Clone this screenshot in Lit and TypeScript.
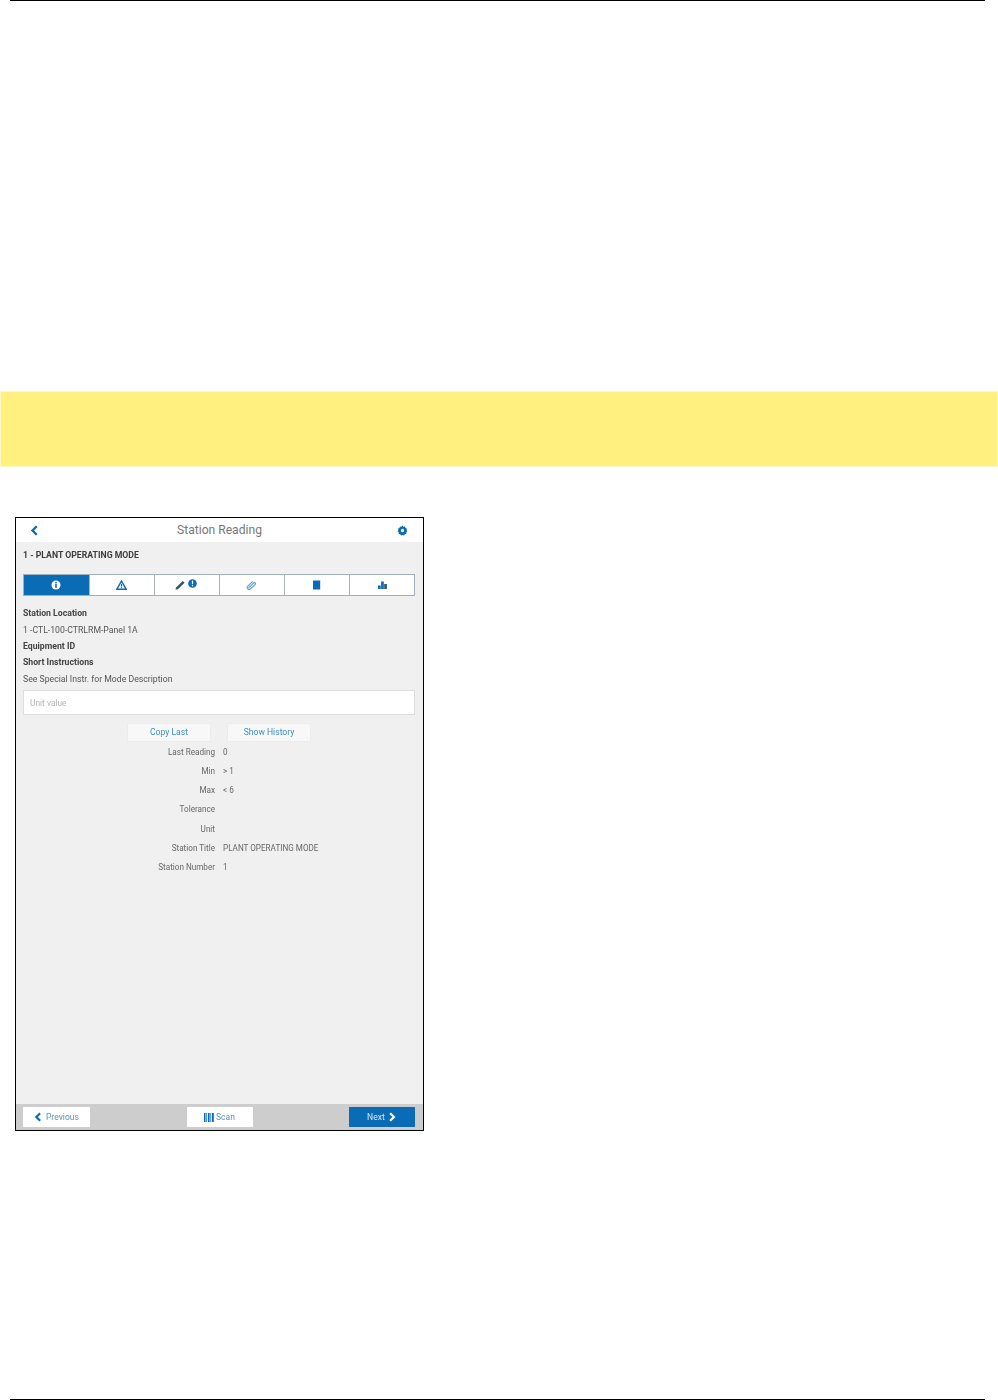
import { LitElement, html, css, svg } from "lit";
import { customElement } from "lit/decorators.js";

const BLUE = "#0a6cb4";

const icons = {
  back: svg`<path d="M8 1.500 3 6.500l5 5" fill="none" stroke-width="2.8" stroke="currentColor"/>`,
  next: svg`<path d="M4 1.500 9 6.500l-5 5" fill="none" stroke-width="2.8" stroke="currentColor"/>`,
};

@customElement("app-root")
export class AppRoot extends LitElement {
  static styles = css`
    :host {
      --blue: #0a6cb4;
      display: block;
      width: 998px;
      height: 1400px;
      background: #fff;
      font-family: Roboto, "Liberation Sans", sans-serif;
      overflow: hidden;
    }
    .page { display: flex; flex-direction: column; height: 1400px; }
    .rule { height: 1px; background: #000; margin: 0 13px 0 10px; flex: none; }
    .banner { height: 74px; margin: 391px 1px 0 1px; background: #fff07f; flex: none; box-shadow: 0 0 0 1px #fff8c4; }
    .phone {
      margin: 51px 0 0 15px;
      width: 407px;
      height: 612px;
      border: 1px solid #000;
      background: #f0f0f0;
      display: flex;
      flex-direction: column;
      flex: none;
    }
    .inner { display: flex; flex-direction: column; flex: 1; filter: blur(0.5px); min-height: 0; }
    .head {
      height: 24px;
      background: #fff;
      display: grid;
      grid-template-columns: 38px 1fr 38px;
      align-items: center;
      flex: none;
      color: var(--blue);
    }
    .head .title { text-align: center; font-size: 12.1px; color: #777; }
    .head svg { justify-self: center; display: block; }
    .head .backicon { margin-left: 1px; }
    .head .gear { margin-right: 4px; }
    .body { flex: 1; padding: 0 8px 0 7px; color: #444; font-size: 8.7px; min-height: 0; }
    .station { font-weight: 700; color: #3c3c3c; height: 25px; line-height: 26px; margin-bottom: 7px; }
    .tabs {
      display: grid;
      grid-template-columns: repeat(6, 1fr);
      height: 22px;
      border: 1px solid #9fb0bc;
      background: #fff;
      box-sizing: border-box;
      margin-bottom: 9.5px;
    }
    .tab {
      display: flex;
      align-items: center;
      justify-content: center;
      gap: 2px;
      padding-right: 2px;
      border-left: 1px solid #a9b4bb;
      color: var(--blue);
    }
    .tab:first-child { border-left: 0; }
    .tab:last-child { padding-right: 0; }
    .tab.on { background: var(--blue); color: #fff; }
    .tab .up { margin-top: -3px; }
    .info { line-height: 15.5px; }
    .info .b { font-weight: 700; color: #444; }
    .info .r { color: #555; margin: 1.5px 0 1px; }
    .input {
      height: 25px;
      box-sizing: border-box;
      margin-top: 3px;
      border: 1px solid #ddd;
      background: #fff;
      padding-left: 6px;
      line-height: 24px;
      font-size: 8.4px;
      color: #b5b5b5;
    }
    .actions { display: flex; justify-content: center; gap: 16px; margin-top: 8px; }
    .btn {
      width: 84px;
      height: 19px;
      box-sizing: border-box;
      background: #f8f8f8;
      border: 1px solid #ececec;
      color: #3d8fc6;
      text-align: center;
      line-height: 17px;
      font-size: 8.6px;
    }
    .readings {
      display: grid;
      grid-template-columns: 192px 1fr;
      column-gap: 8px;
      grid-auto-rows: 19.3px;
      line-height: 19.3px;
      font-size: 8.15px;
      color: #666;
      margin-top: 0.5px;
    }
    .readings .l { text-align: right; }
    .foot {
      height: 26px;
      flex: none;
      background: #cdcdcd;
      display: flex;
      justify-content: space-between;
      padding: 3px 8px 3px 7px;
      box-sizing: border-box;
      font-size: 8.6px;
    }
    .fbtn {
      width: 66px;
      background: #fff;
      color: #5d95c0;
      display: flex;
      align-items: center;
      justify-content: center;
      gap: 2px;
    }
    .fbtn:first-child { width: 67px; }
    .fbtn.primary { background: var(--blue); color: #d5e6f3; }
    .fbtn .chev { color: var(--blue); }
    .fbtn.primary .chev { color: #fff; }
    .spacer { flex: 1; }
  `;

  private chevron(dir: "back" | "next", size: number) {
    return html`<svg class="chev" width=${size} height=${size} viewBox="0 0 13 13">${icons[dir]}</svg>`;
  }

  private tabIcons() {
    return [
      html`<svg width="10" height="10" viewBox="0 0 10 10"><circle cx="5" cy="5" r="4.5" fill="currentColor"/><rect x="4.2" y="2" width="1.6" height="1.4" fill="${BLUE}"/><rect x="4.2" y="4" width="1.6" height="3.8" fill="${BLUE}"/></svg>`,
      html`<svg width="11" height="10" viewBox="0 0 11 10"><path d="M5.500 1 10.200 9.300H.8Z" fill="none" stroke="currentColor" stroke-width="1.4"/><rect x="4.9" y="3.8" width="1.2" height="2.8" fill="currentColor"/><rect x="4.9" y="7.1" width="1.2" height="1.1" fill="currentColor"/></svg>`,
      html`<svg width="11" height="10" viewBox="0 0 11 10"><path d="M.5 9.700 1 7.400 7.800.9 9.600 2.700 2.800 9.200Z" fill="#33566f"/></svg><svg class="up" width="9" height="9" viewBox="0 0 9 9"><circle cx="4.500" cy="4.500" r="4.300" fill="currentColor"/><rect x="3.900" y="1.600" width="1.200" height="3.600" fill="#fff"/><rect x="3.900" y="6" width="1.200" height="1.200" fill="#fff"/></svg>`,
      html`<svg width="11" height="10" viewBox="0 0 11 10" opacity=".65"><path d="M2.400 8.200 8.200 2.400a1.300 1.300 0 0 1 1.100 1.900L4 9.200A1.900 1.900 0 0 1 1.400 6.600L6.600 1.400" fill="none" stroke="currentColor" stroke-width="1.100"/></svg>`,
      html`<svg width="9" height="10" viewBox="0 0 9 10"><path d="M1 .5H8.200V9.500H1Z" fill="currentColor"/></svg>`,
      html`<svg width="11" height="10" viewBox="0 0 11 10"><rect x="1" y="5.500" width="2.700" height="3.500" fill="currentColor"/><rect x="4.100" y="1.500" width="2.700" height="7.500" fill="currentColor"/><rect x="7.200" y="4" width="2.700" height="5" fill="#33566f"/></svg>`,
    ];
  }

  render() {
    const rows: [string, string][] = [
      ["Last Reading", "0"],
      ["Min", "> 1"],
      ["Max", "< 6"],
      ["Tolerance", ""],
      ["Unit", ""],
      ["Station Title", "PLANT OPERATING MODE"],
      ["Station Number", "1"],
    ];
    return html`
      <div class="page">
        <div class="rule"></div>
        <div class="banner"></div>
        <div class="phone">
          <div class="inner">
            <div class="head">
              <svg class="backicon" width="11" height="11" viewBox="0 0 13 13">${icons.back}</svg>
              <div class="title">Station Reading</div>
              <svg class="gear" width="11" height="11" viewBox="0 0 12 12">
                <path fill="currentColor" fill-rule="evenodd" d="M6 .6 7 2l1.700-.3.6 1.600 1.600.7-.4 1.600L11.400 7l-1.300 1 .1 1.700-1.700.3-.9 1.400L6 10.800l-1.600.6-.9-1.400-1.700-.3.1-1.700L.6 7l.9-1.400-.4-1.600 1.600-.7.6-1.600L5 2Zm0 3.600a1.800 1.800 0 1 0 0 3.600 1.800 1.800 0 0 0 0-3.600Z"/>
              </svg>
            </div>
            <div class="body">
              <div class="station">1 - PLANT OPERATING MODE</div>
              <div class="tabs">
                ${this.tabIcons().map((i, n) => html`<div class="tab ${n === 0 ? "on" : ""}">${i}</div>`)}
              </div>
              <div class="info">
                <div class="b">Station Location</div>
                <div class="r">1 -CTL-100-CTRLRM-Panel 1A</div>
                <div class="b">Equipment ID</div>
                <div class="b">Short Instructions</div>
                <div class="r">See Special Instr. for Mode Description</div>
              </div>
              <div class="input">Unit value</div>
              <div class="actions">
                <div class="btn">Copy Last</div>
                <div class="btn">Show History</div>
              </div>
              <div class="readings">
                ${rows.map(([l, v]) => html`<div class="l">${l}</div><div>${v}</div>`)}
              </div>
            </div>
            <div class="foot">
              <div class="fbtn">${this.chevron("back", 10)}<span>Previous</span></div>
              <div class="fbtn">
                <svg width="10" height="9" viewBox="0 0 10 9"><path fill="${BLUE}" d="M0 0h1.500v9H0zM2.300 0h.8v9h-.8zM4 0h1.600v9H4zM6.400 0h.8v9h-.8zM8 0h1.800v9H8z"/></svg>
                <span>Scan</span>
              </div>
              <div class="fbtn primary"><span>Next</span>${this.chevron("next", 10)}</div>
            </div>
          </div>
        </div>
        <div class="spacer"></div>
        <div class="rule"></div>
      </div>
    `;
  }
}
